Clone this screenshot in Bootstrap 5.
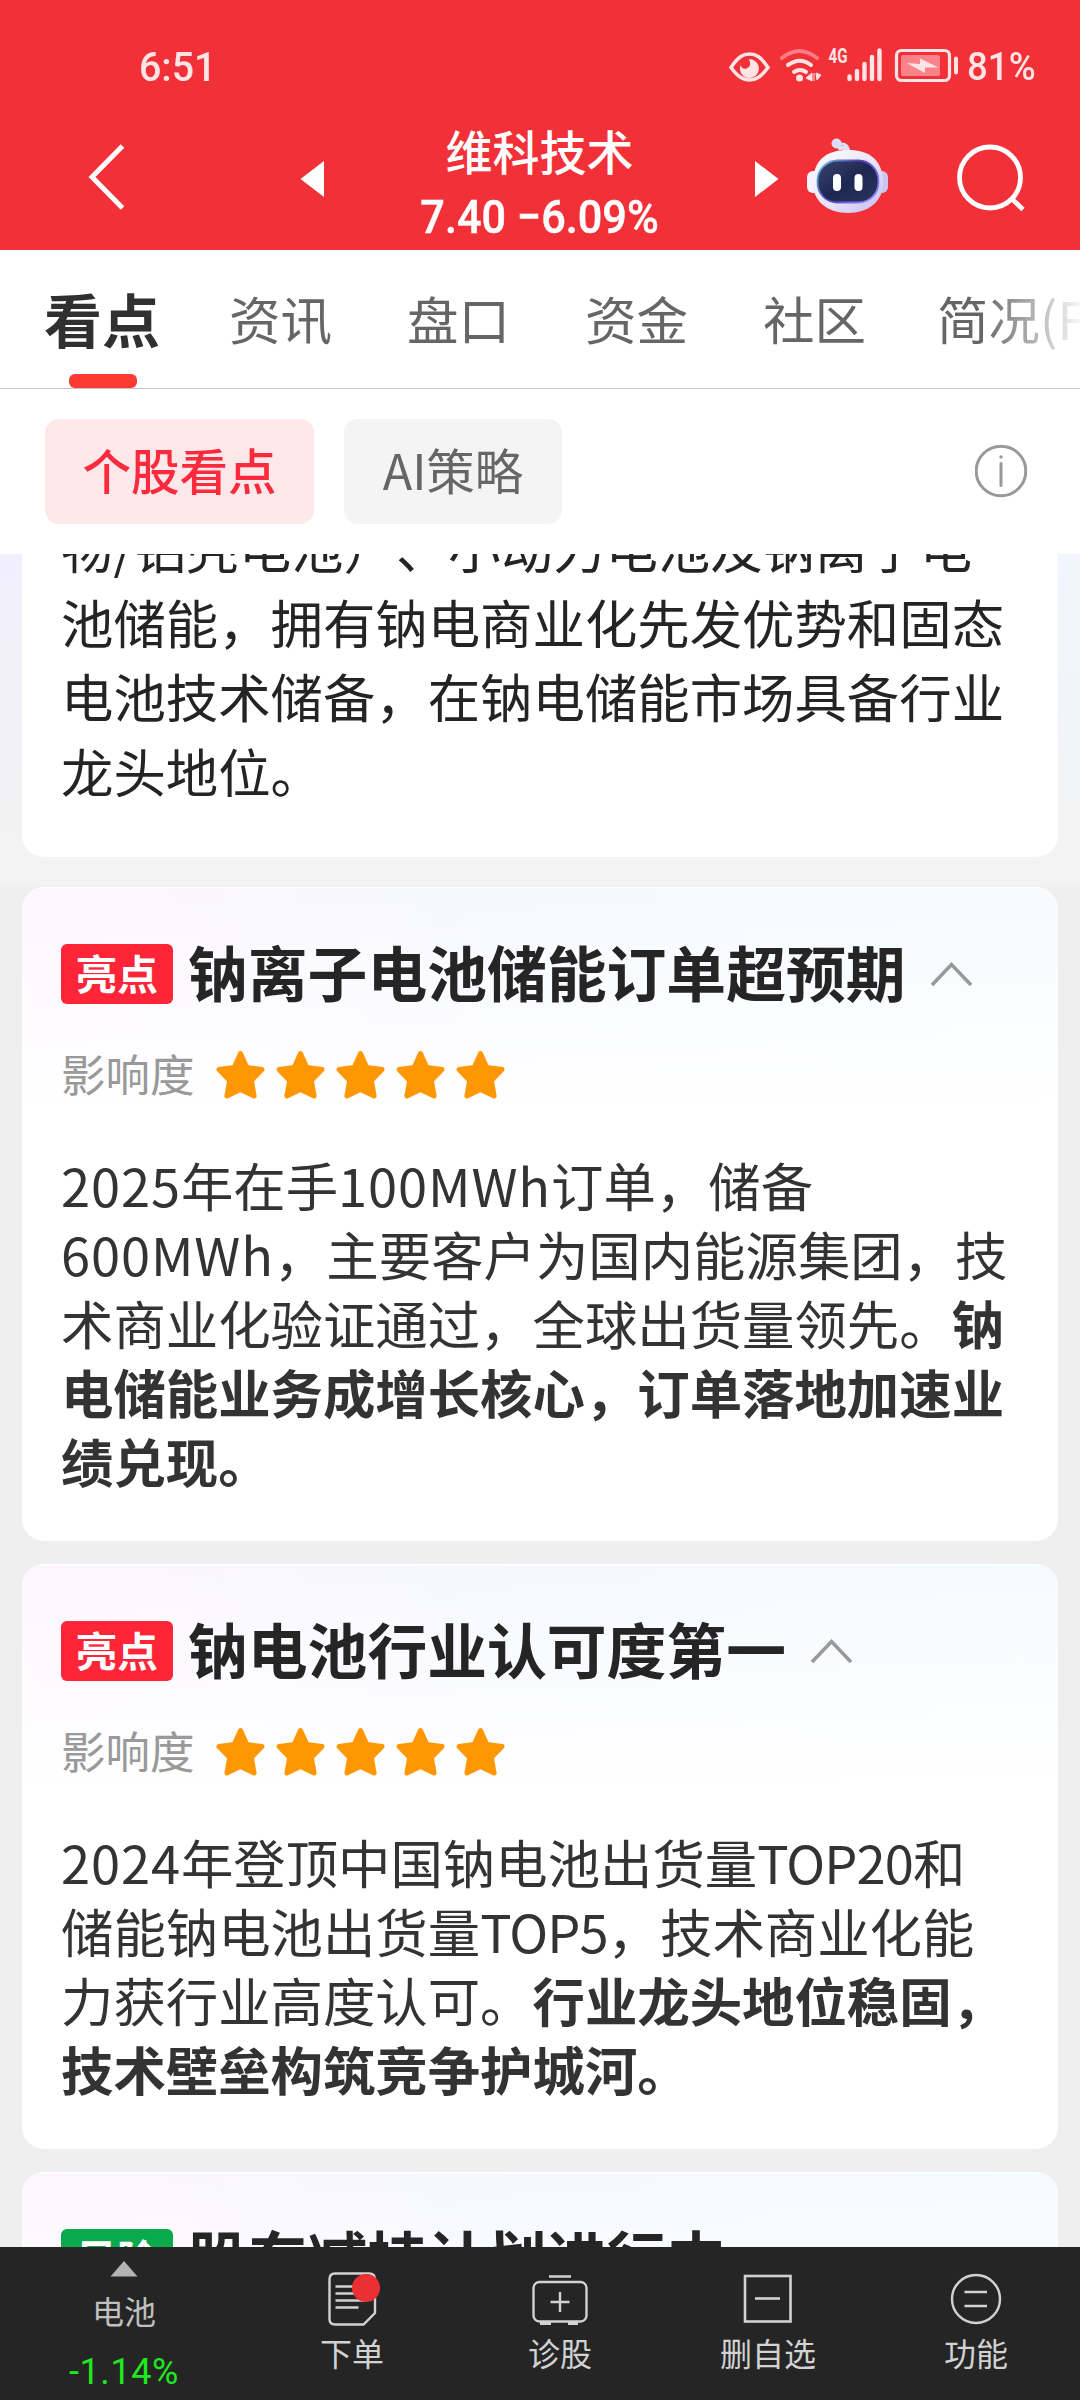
<!DOCTYPE html>
<html lang="zh-CN">
<head>
<meta charset="utf-8">
<meta name="viewport" content="width=device-width, initial-scale=1">
<title>维科技术</title>
<link href="https://cdn.jsdelivr.net/npm/bootstrap@5.3.0/dist/css/bootstrap.min.css" rel="stylesheet">
<style>
  body { width: 1080px; height: 2400px; overflow: hidden; background: #efefef; color: #333; font-family: "Noto Sans CJK SC", sans-serif; }
  svg { display: block; flex: none; }
  .app { height: 2400px; }
  .din { font-family: Roboto, "Noto Sans CJK SC", sans-serif; font-weight: 500; display: inline-block; white-space: nowrap; }
  .topbar { height: 250px; background: #f23038; color: #fff; }
  .status { height: 130px; padding: 0 42px 0 139px; color: #ffe4e6; }
  .clock { font-size: 41px; line-height: 40px; margin-top: 47px; transform: scaleX(.96); transform-origin: left; }
  .batt { font-size: 39px; line-height: 40px; margin: 47px 0 0 3px; width: 71px; transform: scaleX(.94); transform-origin: left; }
  .status svg { margin: 40px 0 0; }
  .titlerow { height: 120px; }
  .stock { width: 431px; text-align: center; }
  .sname { font-size: 47px; font-weight: 500; line-height: 60px; margin: -10px 2px 0 0; }
  .sprice { font-size: 47px; line-height: 60px; margin: 7px 2px 0 0; transform: scaleX(.92); -webkit-text-stroke: .5px #fff; }
  .tabs { height: 139px; border-bottom: 1px solid #c4c4c4; background: #fff; padding-left: 45px; overflow: hidden; }
  .tabs a { color: #666; text-decoration: none; font-size: 51.5px; line-height: 70px; padding: 33px 0 0; margin-right: 75px; flex: none; white-space: nowrap; }
  .tabs a.on { color: #303030; font-size: 58px; font-weight: 700; position: relative; margin-right: 69px; margin-left: -1px; }
  .tabs a.on::after { content: ""; position: absolute; left: 25px; bottom: 0; width: 68px; height: 14px; border-radius: 6px; background: #fb3b31; }
  .tabs a.fade-end { margin-left: -4px; background: linear-gradient(90deg, #666 45px, #fff 148px); -webkit-background-clip: text; background-clip: text; color: transparent; }
  .chips { height: 165px; background: #fff; padding: 30px 53px 0 45px; }
  .chip { height: 105px; border-radius: 14px; font-size: 48.5px; line-height: 101px; text-align: center; background: #f4f4f4; color: #666; }
  .chip.on { width: 269px; background: #ffe8ea; color: #fb2a3c; font-weight: 500; }
  .chip.ai { width: 218px; margin-left: 30px; }
  .feed { height: 1693px; overflow: hidden; background: #efefef; }
  .hero { height: 331px; padding: 0 22px; background: linear-gradient(180deg, rgba(243,243,243,0), #f3f3f3 290px), linear-gradient(90deg, #f1effc, #f1f6fc); }
  .panel { background: #fff; border-radius: 0 0 22px 22px; height: 303px; padding: 0 39px; overflow: hidden; }
  .copy { font-size: 52.4px; line-height: 69px; white-space: nowrap; margin: 0; }
  .panel .copy { line-height: 74.5px; color: #242424; margin-top: -45px; }
  .copy b { font-weight: 700; }
  .lat { letter-spacing: .9px; }
  .caps { letter-spacing: -.9px; }
  .fullw { display: inline-block; width: 52.4px; }
  .item { margin: 0 22px 23px; border: 1px solid #fff; border-radius: 22px; padding: 51px 38px 45px;
    background: linear-gradient(180deg, rgba(255,255,255,0), #fff 220px), linear-gradient(90deg, #fdf6ff, #f6f8ff 45%, #f6fbff); }
  .item.first { margin-top: 2px; }
  .head { height: 70px; }
  .tag { width: 112px; height: 60px; border-radius: 6px; background: #fe2539; color: #fff; font-size: 41px; font-weight: 700; line-height: 56px; text-align: center; flex: none; }
  .tag.risk { background: #09aa4c; }
  .ttl { font-size: 59.8px; font-weight: 700; line-height: 70px; color: #252525; margin: -6px 0 0 15px; white-space: nowrap; }
  .head svg { margin-left: 24px; }
  .rate { height: 60px; margin-top: 36px; font-size: 44.5px; line-height: 60px; color: #999; }
  .rate span { margin-top: -5px; width: 154px; }
  .item .copy { margin-top: 45px; }
  .dock { height: 153px; background: #252525; color: #d2d2d2; font-size: 32px; line-height: 44px; }
  .dock .idx { width: 248px; color: #c0c0c0; }
  .dock .act { width: 208px; padding-top: 22px; }
  .dock .act div { margin-top: 3px; }
  .chg { font-size: 36px; color: #1fe81f; font-weight: 400; line-height: 40px; margin-top: 20px; letter-spacing: .6px; }
</style>
<script src="https://cdn.jsdelivr.net/npm/bootstrap@5.3.0/dist/js/bootstrap.bundle.min.js"></script>
</head>
<body>
<svg width="0" height="0" class="position-absolute">
  <defs>
    <path id="star" d="M24 2.5 L30.3 16.6 L45.5 18.6 L34.8 29.5 L37.6 45 L24 38.6 L10.4 45 L13.2 29.5 L2.5 18.6 L17.7 16.6 Z" fill="#ff9702" stroke="#ff9702" stroke-width="5" stroke-linejoin="round"/>
    <g id="stars"><use href="#star"/><use href="#star" x="60"/><use href="#star" x="120"/><use href="#star" x="180"/><use href="#star" x="240"/></g>
    <path id="chev" d="M2 24 L21.500 3.500 L41 24" fill="none" stroke="#999" stroke-width="3.600"/>
    <linearGradient id="shell" x1="0" y1="0" x2="1" y2="1"><stop offset="0" stop-color="#fff"/><stop offset=".55" stop-color="#e6e4f8"/><stop offset="1" stop-color="#c3bdf0"/></linearGradient>
    <linearGradient id="rim" x1="0" y1="0" x2="1" y2="0.6"><stop offset="0" stop-color="#62d5ea"/><stop offset=".5" stop-color="#5a3bb8"/><stop offset="1" stop-color="#8b7cf0"/></linearGradient>
    <linearGradient id="face" x1="0" y1="0" x2="1" y2="1"><stop offset="0" stop-color="#3c4670"/><stop offset=".5" stop-color="#1d2750"/><stop offset="1" stop-color="#2a3562"/></linearGradient>
  </defs>
</svg>
<div class="app d-flex flex-column">
  <header class="topbar">
    <div class="status d-flex justify-content-between">
      <span class="din clock">6:51</span>
      <div class="d-flex">
        <svg width="240" height="50" viewBox="724 40 240 50" fill="none" stroke="#ffe4e6">
          <path d="M731 67.500 C738 57 743 54 749.500 54 S761 57 768 67.500 C761 77 756 80 749.500 80 S738 77 731 67.500 Z" stroke-width="3.600"/>
          <path d="M749 59 a9.500 9.500 0 1 1 -8.500 6 q2 5 6 3.500 q6 -2 2.500 -9.500 Z" fill="#ffe4e6" stroke="none"/>
          <path d="M782 58 Q799.500 44 817 58" stroke="#fb7c82" stroke-width="4" stroke-linecap="round"/>
          <path d="M788 65 Q800 56.500 811 65 M794 72 Q800 68 806 72" stroke-width="4" stroke-linecap="round"/>
          <circle cx="799.500" cy="78" r="3.500" fill="#ffe4e6" stroke="none"/>
          <path d="M812 73 V81 L806 78 Z M814 73 V81 M816 73 L821 75 L817 80 Z" fill="#ffe4e6" stroke-width="1"/>
          <text x="828.500" y="62.500" font-family="Roboto, sans-serif" font-weight="700" font-size="20.500" textLength="19" lengthAdjust="spacingAndGlyphs" fill="#ffe4e6" stroke="none">4G</text>
          <path d="M849.500 76.500 V79 M857 71 V79 M864.500 64 V79 M872 57 V79 M879.500 50.500 V79" stroke-width="4.400" stroke-linecap="round"/>
          <rect x="896.500" y="50.500" width="53" height="30" rx="5" stroke-width="3.200"/>
          <rect x="901" y="55" width="39" height="21" rx="2" fill="#f98388" stroke="none"/>
          <path d="M956 58.500 V72.500" stroke-width="4" stroke-linecap="round"/>
          <path d="M906.500 63 L920 64 V58.500 L938.500 67.500 L925 67.500 V73 Z" fill="#ffe4e6" stroke="none"/>
        </svg>
        <span class="din batt">81%</span>
      </div>
    </div>
    <div class="titlerow d-flex">
      <svg width="60" height="80" viewBox="80 140 60 80" style="margin:10px 0 0 80px"><path d="M122.500 151 L92 182 L122.500 213" transform="translate(0 -5)" fill="none" stroke="#fff" stroke-width="5"/></svg>
      <svg width="25" height="40" style="margin:29px 0 0 160px"><path d="M.5 20 L24 2 V38 Z" fill="#fff"/></svg>
      <div class="stock">
        <div class="sname">维科技术</div>
        <div class="din sprice">7.40 −6.09%</div>
      </div>
      <svg width="25" height="40" style="margin:29px 0 0 -2px"><path d="M24.500 20 L1 2 V38 Z" fill="#fff"/></svg>
      <svg width="84" height="78" viewBox="806 138 84 78" style="margin:8px 0 0 27px">
        <path d="M838 148.500 Q848 145 849 156" fill="none" stroke="#e4def5" stroke-width="4"/>
        <circle cx="836.500" cy="143.500" r="5" fill="#dcdcf4"/>
        <path d="M839 144.500 Q848 142 849 153" fill="none" stroke="#e4def5" stroke-width="3"/>
        <rect x="807" y="171" width="13" height="22" rx="6" fill="#f4f2fd"/><rect x="875" y="171" width="13" height="22" rx="6" fill="#cac4f2"/>
        <path d="M848 150 C870 150 882 160 883.500 182 C883 202 868 213 848 213 S813 202 812.500 182 C814 160 826 150 848 150 Z" fill="url(#shell)"/>
        <rect x="817.500" y="160.500" width="61" height="42" rx="20" fill="url(#face)" stroke="url(#rim)" stroke-width="1.800"/>
        <rect x="833" y="174" width="8" height="17" rx="4" fill="#fff"/><rect x="854.500" y="174" width="8" height="17" rx="4" fill="#fff"/>
      </svg>
      <svg width="76" height="76" viewBox="954 140 76 76" style="margin:10px 0 0 64px" fill="none" stroke="#fff" stroke-width="4.800"><circle cx="990" cy="177.500" r="30.500"/><path d="M1011 198 L1023 209.500"/></svg>
    </div>
  </header>
  <nav class="tabs d-flex">
    <a class="on" href="#">看点</a><a href="#">资讯</a><a href="#">盘口</a><a href="#">资金</a><a href="#">社区</a><a class="fade-end" href="#">简况(F</a>
  </nav>
  <div class="chips d-flex">
    <div class="chip on">个股看点</div>
    <div class="chip ai">AI策略</div>
    <svg class="ms-auto" width="52" height="56" style="margin-top:24px" fill="none" stroke="#999"><circle cx="26" cy="28" r="24.800" stroke-width="3"/><path d="M26 20.500 V42.500" stroke-width="3" stroke-linecap="round"/><circle cx="26" cy="14" r="1.700" fill="#999" stroke="none"/></svg>
  </div>
  <main class="feed">
    <section class="hero"><div class="panel"><p class="copy">物/铝壳电池<span class="fullw">）</span><span class="fullw">、</span>小动力电池及钠离子电<br>池储能，拥有钠电商业化先发优势和固态<br>电池技术储备，在钠电储能市场具备行业<br>龙头地位。</p></div></section>
    <section class="item first">
      <div class="head d-flex align-items-center"><div class="tag">亮点</div><h2 class="ttl">钠离子电池储能订单超预期</h2><svg width="43" height="27"><use href="#chev"/></svg></div>
      <div class="rate d-flex align-items-center"><span>影响度</span><svg width="290" height="50"><use href="#stars" x="1.500" y="1"/></svg></div>
      <p class="copy"><span class="lat">2025</span>年在手<span class="lat">100MWh</span>订单，储备<br><span class="lat">600MWh</span>，主要客户为国内能源集团，技<br>术商业化验证通过，全球出货量领先。<b>钠<br>电储能业务成增长核心，订单落地加速业<br>绩兑现。</b></p>
    </section>
    <section class="item">
      <div class="head d-flex align-items-center"><div class="tag">亮点</div><h2 class="ttl">钠电池行业认可度第一</h2><svg width="43" height="27"><use href="#chev"/></svg></div>
      <div class="rate d-flex align-items-center"><span>影响度</span><svg width="290" height="50"><use href="#stars" x="1.500" y="1"/></svg></div>
      <p class="copy"><span class="lat">2024</span>年登顶中国钠电池出货量<span class="caps">TOP20</span>和<br>储能钠电池出货量<span class="caps">TOP5</span>，技术商业化能<br>力获行业高度认可。<b>行业龙头地位稳固，<br>技术壁垒构筑竞争护城河。</b></p>
    </section>
    <section class="item">
      <div class="head d-flex align-items-center"><div class="tag risk">风险</div><h2 class="ttl">股东减持计划进行中</h2><svg width="43" height="27"><use href="#chev"/></svg></div>
    </section>
  </main>
  <footer class="dock d-flex text-center">
    <div class="idx d-flex flex-column align-items-center">
      <svg width="28" height="16" style="margin-top:14px"><path d="M14 0 L27.500 15.500 H.5 Z" fill="#b3b3b3"/></svg>
      <div style="margin-top:11px">电池</div>
      <div class="din chg">-1.14%</div>
    </div>
    <div class="act d-flex flex-column align-items-center">
      <svg width="56" height="58" viewBox="324 2269 56 58" fill="none" stroke="#d2d2d2" stroke-width="2.400"><path d="M335 2273.500 H369 Q375 2273.500 375 2279.500 V2313 L363.500 2324.500 H335 Q329.500 2324.500 329.500 2319 V2279.500 Q329.500 2273.500 335 2273.500 Z M335.500 2286.500 H358 M335.500 2293.500 H359 M335.500 2300.500 H367 M335.500 2307.500 H358.500"/><circle cx="366" cy="2288" r="14" fill="#eb3033" stroke="none"/></svg>
      <div>下单</div>
    </div>
    <div class="act d-flex flex-column align-items-center">
      <svg width="60" height="58" viewBox="530 2269 60 58" fill="none" stroke="#d2d2d2" stroke-width="2.400"><rect x="533.500" y="2282" width="53" height="39.500" rx="6"/><path d="M549 2276.500 H571 M560 2292 V2312 M550.500 2302 H569.500"/><path d="M540 2323.500 H551 M568 2323.500 H578" stroke-width="3"/></svg>
      <div>诊股</div>
    </div>
    <div class="act d-flex flex-column align-items-center">
      <svg width="56" height="58" viewBox="740 2269 56 58" fill="none" stroke="#d2d2d2" stroke-width="2.600"><rect x="745" y="2276" width="45.500" height="45.500"/><path d="M755 2298.500 H780"/></svg>
      <div>删自选</div>
    </div>
    <div class="act d-flex flex-column align-items-center">
      <svg width="56" height="58" viewBox="948 2269 56 58" fill="none" stroke="#d2d2d2" stroke-width="2.400"><circle cx="976" cy="2299" r="24"/><path d="M964.500 2292 H987 M964.500 2306 H987"/></svg>
      <div>功能</div>
    </div>
  </footer>
</div>
</body>
</html>
